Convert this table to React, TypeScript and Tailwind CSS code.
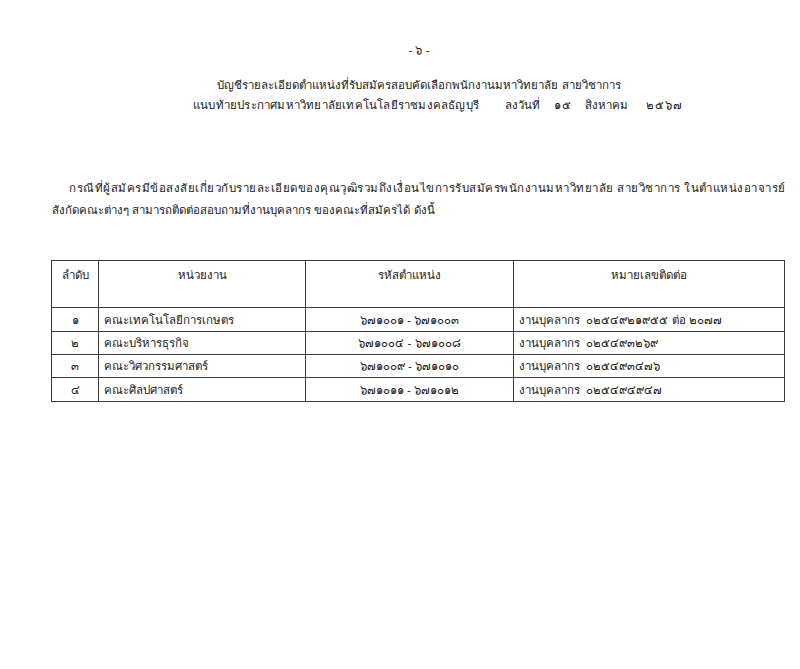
import React from "react";

const rows = [
  ["๑", "คณะเทคโนโลยีการเกษตร", "๖๗๑๐๐๑ - ๖๗๑๐๐๓", "งานบุคลากร  ๐๒๕๔๙๒๑๙๕๕ ต่อ ๒๐๗๗"],
  ["๒", "คณะบริหารธุรกิจ", "๖๗๑๐๐๔ - ๖๗๑๐๐๘", "งานบุคลากร  ๐๒๕๔๙๓๒๖๙"],
  ["๓", "คณะวิศวกรรมศาสตร์", "๖๗๑๐๐๙ - ๖๗๑๐๑๐", "งานบุคลากร  ๐๒๕๔๙๓๔๗๖"],
  ["๔", "คณะศิลปศาสตร์", "๖๗๑๐๑๑ - ๖๗๑๐๑๒", "งานบุคลากร  ๐๒๕๔๙๔๙๔๗"],
];

const cell = "border border-[#3a3a3a] p-0";

export default function App() {
  return (
    <div className="w-[800px] h-[669px] bg-white text-[#1a1a1a] text-[11.5px] font-['Liberation_Sans',sans-serif]">
      <div className="pt-[41px] pl-[38px] text-center leading-[18px]">- ๖ -</div>
      <div className="mt-[16px] leading-[20px] whitespace-nowrap">
        <div className="pl-[38px] text-center">บัญชีรายละเอียดตำแหน่งที่รับสมัครสอบคัดเลือกพนักงานมหาวิทยาลัย สายวิชาการ</div>
        <div className="flex pl-[193px]">
          <span className="tracking-[0.2px]">แนบท้ายประกาศมหาวิทยาลัยเทคโนโลยีราชมงคลธัญบุรี</span>
          <span className="ml-[26px]">ลงวันที่</span>
          <span className="ml-[14px] tracking-[0.6px]">๑๕</span>
          <span className="ml-[14px]">สิงหาคม</span>
          <span className="ml-[18px] tracking-[0.8px]">๒๕๖๗</span>
        </div>
      </div>
      <div className="mt-[62px] pl-[52px] leading-[22px] whitespace-nowrap">
        <div className="pl-[17px] tracking-[0.5px]">
          กรณีที่ผู้สมัครมีข้อสงสัยเกี่ยวกับรายละเอียดของคุณวุฒิรวมถึงเงื่อนไขการรับสมัครพนักงานมหาวิทยาลัย สายวิชาการ ในตำแหน่งอาจารย์
        </div>
        <div>สังกัดคณะต่างๆ สามารถติดต่อสอบถามที่งานบุคลากร ของคณะที่สมัครได้ ดังนี้</div>
      </div>
      <div className="mt-[39px] ml-[51px] w-[734px]">
        <table className="w-full border-collapse border border-[#3a3a3a] leading-[20px] table-fixed">
          <colgroup>
            <col className="w-[47px]" />
            <col className="w-[207px]" />
            <col className="w-[208px]" />
            <col />
          </colgroup>
          <thead>
            <tr className="h-[47px]">
              <th className={`${cell} font-normal align-top pt-[4px]`}>ลำดับ</th>
              <th className={`${cell} font-normal align-top pt-[4px]`}>หน่วยงาน</th>
              <th className={`${cell} font-normal align-top pt-[4px]`}>รหัสตำแหน่ง</th>
              <th className={`${cell} font-normal align-top pt-[4px]`}>หมายเลขติดต่อ</th>
            </tr>
          </thead>
          <tbody>
            {rows.map((r, i) => (
              <tr key={i} className={i === 0 || i === 3 ? "h-[24px]" : "h-[23px]"}>
                <td className={`${cell} text-center`}>{r[0]}</td>
                <td className={`${cell} pl-[5px]`}>{r[1]}</td>
                <td className={`${cell} text-center`}>{r[2]}</td>
                <td className={`${cell} pl-[5px] whitespace-pre`}>{r[3]}</td>
              </tr>
            ))}
          </tbody>
        </table>
      </div>
    </div>
  );
}
